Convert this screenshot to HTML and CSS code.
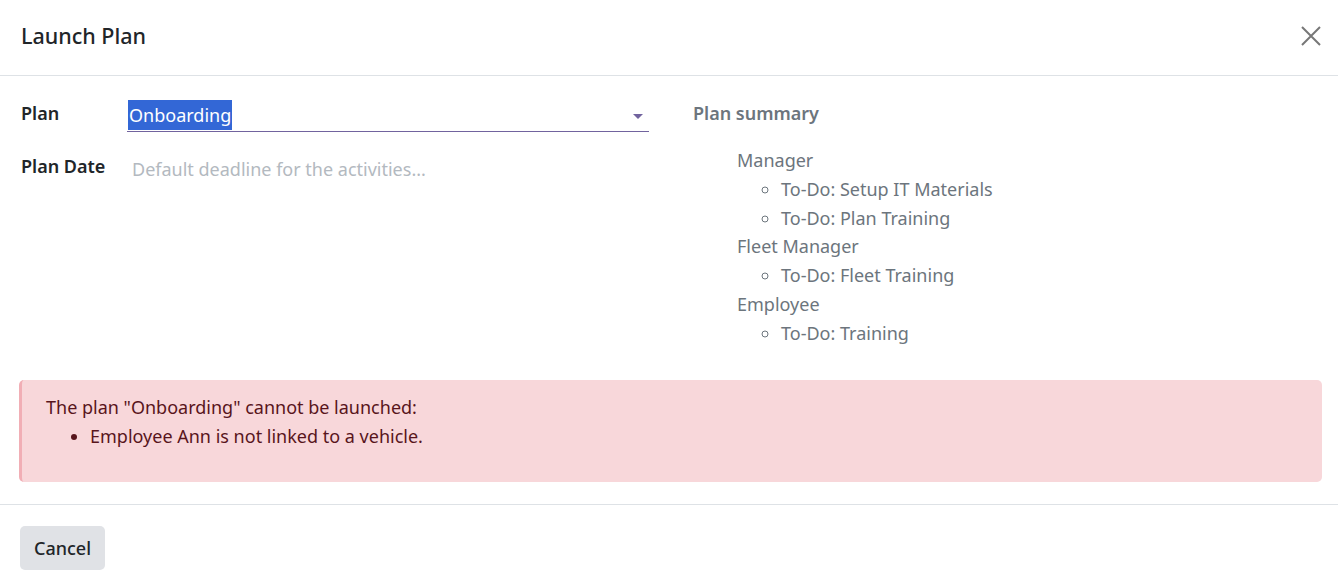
FILE: index.html
```html
<!DOCTYPE html>
<html>
<head>
<meta charset="utf-8">
<link rel="stylesheet" href="styles.css">
</head>
<body>
<div class="modal">
  <header class="modal-header">
    <h4 class="title">Launch Plan</h4>
    <button class="close" aria-label="Close">
      <svg width="22" height="22" viewBox="0 0 22 22"><path d="M2 2L20 20M20 2L2 20" stroke="#777" stroke-width="2" fill="none"/></svg>
    </button>
  </header>
  <main class="modal-body">
    <div class="form">
      <div class="row">
        <label class="label">Plan</label>
        <div class="field select">
          <span class="selected">Onboarding</span>
          <span class="caret"></span>
        </div>
      </div>
      <div class="row">
        <label class="label">Plan Date</label>
        <div class="field date"><span class="placeholder">Default deadline for the activities...</span></div>
      </div>
    </div>
    <div class="summary">
      <div class="summary-title">Plan summary</div>
      <ul class="roles">
        <li>Manager
          <ul class="todos">
            <li>To-Do: Setup IT Materials</li>
            <li>To-Do: Plan Training</li>
          </ul>
        </li>
        <li>Fleet Manager
          <ul class="todos">
            <li>To-Do: Fleet Training</li>
          </ul>
        </li>
        <li>Employee
          <ul class="todos">
            <li>To-Do: Training</li>
          </ul>
        </li>
      </ul>
    </div>
  </main>
  <div class="alert">
    <div>The plan "Onboarding" cannot be launched:</div>
    <ul class="errors"><li>Employee Ann is not linked to a vehicle.</li></ul>
  </div>
  <footer class="modal-footer">
    <button class="btn">Cancel</button>
  </footer>
</div>
</body>
</html>
```
FILE: styles.css
```css
html, body { margin: 0; padding: 0; background: #fff; }
body { font-family: "Noto Sans", "Open Sans", sans-serif; font-size: 18px; color: #212529; }
.modal { width: 1338px; }
.modal-header { height: 76px; box-sizing: border-box; border-bottom: 1px solid #dee2e6; display: flex; align-items: center; justify-content: space-between; padding: 0 15px 4px 21px; }
.title { margin: 0; font-size: 21.5px; font-weight: 500; color: #212529; }
.close { border: 0; background: none; padding: 0; width: 24px; height: 24px; display: flex; align-items: center; justify-content: center; }
.modal-body { display: grid; grid-template-columns: 672px 1fr; padding: 23px 20px 0 21px; height: 304px; box-sizing: border-box; }
.form { display: flex; flex-direction: column; gap: 20px; }
.row { display: flex; align-items: flex-start; }
.label { width: 106px; font-weight: 600; line-height: 28px; flex: none; }
.field { width: 522px; height: 33px; box-sizing: border-box; position: relative; }
.select { border-bottom: 1px solid #71639e; }
.selected { display: inline-block; background: #3367d6; color: #fff; padding: 0 1px; line-height: 30px; margin-left: 1px; margin-top: 1px; }
.caret { position: absolute; right: 6px; top: 15px; border-left: 5px solid transparent; border-right: 5px solid transparent; border-top: 5px solid #71639e; }
.placeholder { color: #b3b9c0; padding-left: 5px; line-height: 34px; }
.summary-title { font-weight: 600; color: #6c757d; line-height: 28px; }
.summary { color: #6c757d; }
.roles { list-style: none; margin: 19px 0 0 0; padding-left: 44px; line-height: 28.8px; }
.todos { list-style: circle; margin: 0; padding-left: 44px; }
.todos li::marker { font-size: 17px; }
.alert { margin: 0 16px 0 19px; height: 102px; box-sizing: border-box; background: #f8d7da; border-left: 3px solid #f1aeb5; border-radius: 5px; padding: 13px 24px; color: #58151c; line-height: 29px; }
.errors { margin: 0; padding-left: 44px; list-style: disc; }
.modal-footer { margin-top: 22px; border-top: 1px solid #dee2e6; padding: 21px 20px; }
.btn { font: inherit; font-weight: 500; background: #e0e2e6; border: 0; border-radius: 5px; color: #212529; height: 44px; padding: 0 14px; }
```
